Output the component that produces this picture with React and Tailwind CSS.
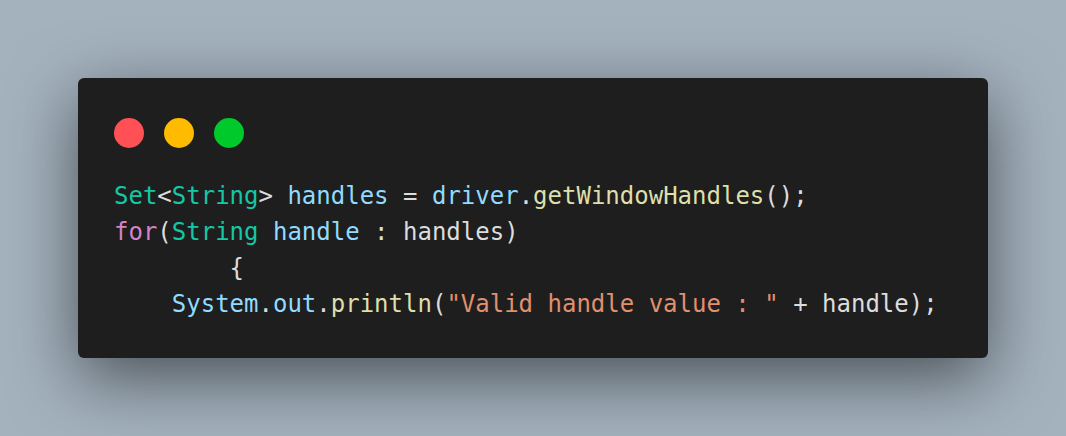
export default function App() {
  const teal = 'text-[#14c8a5]';
  const blue = 'text-[#90dbff]';
  const plain = 'text-[#dcdcdc]';
  const yellow = 'text-[#dfdfaa]';
  const pink = 'text-[#d383c8]';
  const orange = 'text-[#e0906f]';

  return (
    <div className="w-[1066px] h-[436px] bg-[#a4b2be] p-[78px]">
      <div className="h-full bg-[#1e1e1e] rounded-md shadow-[0_20px_68px_rgba(0,0,0,0.55)] pt-[40px] pl-[36px]">
        <div className="flex gap-[20px]">
          <span className="w-[30px] h-[30px] rounded-full bg-[#ff5155]" />
          <span className="w-[30px] h-[30px] rounded-full bg-[#ffbb00]" />
          <span className="w-[30px] h-[30px] rounded-full bg-[#00c92b]" />
        </div>
        <pre className="mt-[30px] text-[24px] leading-[36px] font-['DejaVu_Sans_Mono',monospace]">
          <div>
            <span className={teal}>Set</span>
            <span className={plain}>&lt;</span>
            <span className={teal}>String</span>
            <span className={plain}>&gt; </span>
            <span className={blue}>handles</span>
            <span className={plain}> = </span>
            <span className={blue}>driver</span>
            <span className={plain}>.</span>
            <span className={yellow}>getWindowHandles</span>
            <span className={plain}>();</span>
          </div>
          <div>
            <span className={pink}>for</span>
            <span className={plain}>(</span>
            <span className={teal}>String</span>
            <span className={plain}> </span>
            <span className={blue}>handle</span>
            <span className={plain}> : handles)</span>
          </div>
          <div>
            <span className={plain}>{'        {'}</span>
          </div>
          <div>
            <span className={plain}>{'    '}</span>
            <span className={blue}>System</span>
            <span className={plain}>.</span>
            <span className={blue}>out</span>
            <span className={plain}>.</span>
            <span className={yellow}>println</span>
            <span className={plain}>(</span>
            <span className={orange}>"Valid handle value : "</span>
            <span className={plain}> + handle);</span>
          </div>
        </pre>
      </div>
    </div>
  );
}
